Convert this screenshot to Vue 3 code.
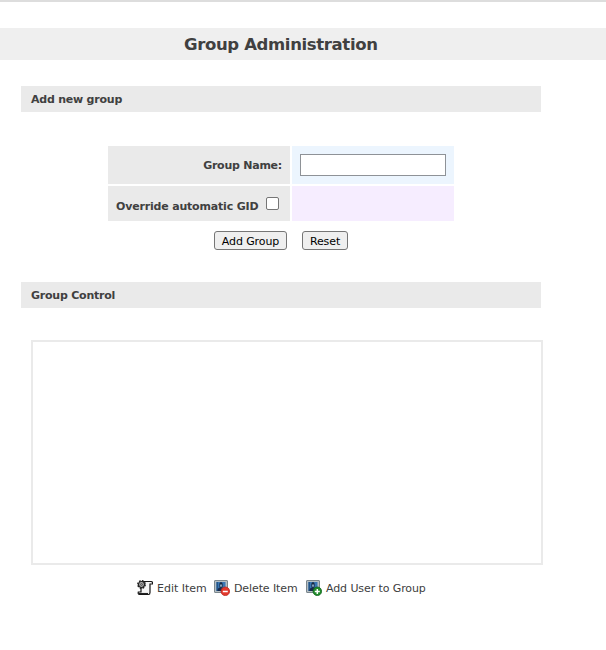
<script setup>
import { ref } from 'vue'
const groupName = ref('')
const override = ref(false)
</script>

<template>
  <main class="page">
    <header class="banner"><h1>Group Administration</h1></header>
    <h2 class="section"><span>Add new group</span></h2>
    <form class="form" @submit.prevent>
      <div class="grid">
        <label class="cell label" for="name"><span>Group Name:</span></label>
        <div class="cell blue"><input id="name" v-model="groupName" class="field" type="text" /></div>
        <label class="cell label second"><span>Override automatic GID</span><input v-model="override" class="check" type="checkbox" /></label>
        <div class="cell violet"></div>
      </div>
      <div class="buttons">
        <button class="add" type="submit"><span>Add Group</span></button>
        <button class="reset" type="reset"><span>Reset</span></button>
      </div>
    </form>
    <h2 class="section"><span>Group Control</span></h2>
    <div class="list"></div>
    <nav class="actions">
      <a class="action edit">
        <svg width="16" height="16" viewBox="0 0 16 16">
          <path d="M5 1.5h9.2c1.1 0 1.5.8 1.3 2.5h-2.5v8.5c0 1.5-.5 2-1.5 2H2.5c-1.2 0-1.5-1-1.2-2.5H4V7z" fill="#f5f5f5" stroke="#151515" stroke-width="1.2" />
          <path d="M2 13.6h9" stroke="#222" stroke-width="1.3" />
          <circle cx="4.5" cy="4.5" r="3.7" fill="none" stroke="#151515" stroke-width="1.4" stroke-dasharray="1.7 1.2" />
          <circle cx="4.5" cy="4.5" r="3" fill="#b4b4b4" stroke="#202020" stroke-width="1.2" />
          <circle cx="4.5" cy="4.5" r="1" fill="#999" stroke="#444" stroke-width=".8" />
        </svg>
        <span>Edit Item</span>
      </a>
      <a v-for="kind in ['remove', 'append']" :key="kind" class="action" :class="kind">
        <svg width="16" height="16" viewBox="0 0 16 16">
          <rect x=".5" y=".5" width="13" height="12" rx=".5" fill="#b5bec3" stroke="#7c878d" />
          <rect x="2.5" y="2" width="9" height="9" fill="#3976b4" />
          <path d="M2.5 2H4v9H2.5z" fill="#235488" />
          <path d="M3.5 11c0-2.2 1-3.5 2.5-3.5h2c1.5 0 2.5 1.3 2.5 3.5z" fill="#18294a" />
          <path d="M5.4 4.2c0-2.6 3.2-2.6 3.2 0v2c0 1-.7 1.6-1.6 1.6s-1.6-.6-1.6-1.6z" fill="#172942" />
          <path d="M6.1 4.5h1.8v1.6c0 1.2-1.8 1.2-1.8 0z" fill="#90aec5" />
          <circle cx="11.3" cy="11.3" r="4.3" :fill="kind === 'remove' ? '#e3382c' : '#218b2a'" :stroke="kind === 'remove' ? '#b92b25' : '#116520'" stroke-width=".8" />
          <path :d="kind === 'remove' ? 'M8.8 11.5h5' : 'M8.8 11.5h5M11.3 9v5'" stroke="#fff" stroke-width="1.5" />
        </svg>
        <span>{{ kind === 'remove' ? 'Delete Item' : 'Add User to Group' }}</span>
      </a>
    </nav>
  </main>
</template>

<style>
body { margin: 0; background: #fff; }
</style>
<style scoped>
* { box-sizing: border-box; }
.page { height: 650px; border-top: 2px solid #ddd; overflow: hidden; font: 11px/14px Verdana, "DejaVu Sans", sans-serif; color: #404040; white-space: nowrap; }
.banner { margin-top: 26px; height: 32px; background: #efefef; padding-left: 184px; }
h1 { margin: 0; font-size: 16.5px; line-height: 34px; letter-spacing: -.36px; }
.section { margin: 26px 0 0 21px; width: 520px; height: 26px; background: #eaeaea; padding-left: 10px; font-size: 11px; line-height: 28px; letter-spacing: -.22px; }
.form { margin: 34px 0 0 108px; width: 346px; }
.grid { display: grid; grid-template-columns: 182px 162px; grid-template-rows: 38px 35px; gap: 2px; }
.cell { display: flex; align-items: center; }
.label { background: #eaeaea; justify-content: flex-end; padding: 2px 8px 0 0; font-weight: bold; letter-spacing: -.24px; }
.second { justify-content: flex-start; padding: 6px 0 0 8px; letter-spacing: -.18px; }
.blue { background: #ecf5fe; padding-left: 8px; }
.violet { background: #f6edff; }
.field { width: 146px; height: 22px; border: 1px solid #8e9297; background: #fff; padding: 1px 4px; outline: 0; }
.check { appearance: none; width: 13px; height: 13px; margin: 0 0 6px 8px; border: 1px solid #767676; border-radius: 2px; background: #fff; }
.check:checked { background: #0075ff; }
.buttons { margin: 10px 0 0 106px; display: flex; gap: 15px; }
button { height: 19px; padding: 2px 0 0; border: 1px solid #767676; border-radius: 3px; background: #efefef; color: #000; font: 11px/15px Verdana, "DejaVu Sans", sans-serif; letter-spacing: -.1px; }
.add { width: 73px; }
.reset { width: 46px; }
.form + .section { margin-top: 32px; }
.list { margin: 32px 0 0 31px; width: 512px; height: 225px; border: 2px solid #eaeaea; }
.actions { display: flex; margin: 15px 0 0 137px; letter-spacing: -.1px; }
.action { display: flex; align-items: center; gap: 4px; height: 16px; }
.action svg { flex: none; }
.action span { padding-top: 2px; }
.edit { width: 77px; letter-spacing: 0; }
.remove { width: 92px; }
</style>
